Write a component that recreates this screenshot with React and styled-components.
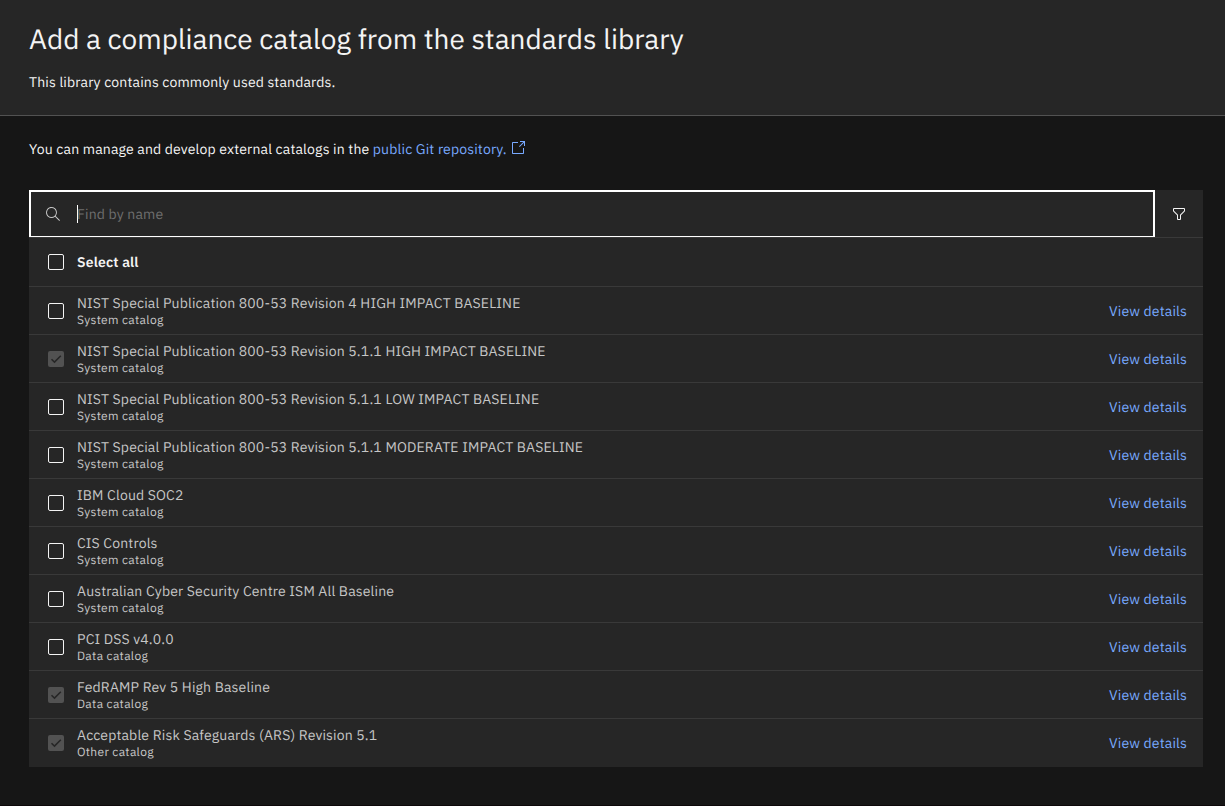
import React from "react";
import styled, { createGlobalStyle } from "styled-components";

const GlobalStyle = createGlobalStyle`
  * { box-sizing: border-box; }
  html, body { margin: 0; height: 100%; background: #161616; overflow: hidden; }
  body {
    font-family: "IBM Plex Sans", Roboto, "Liberation Sans", sans-serif;
    font-size: 14px;
    line-height: 18px;
    letter-spacing: 0.16px;
    color: #f4f4f4;
    text-rendering: geometricPrecision;
  }
`;

const Page = styled.div`
  display: flex;
  flex-direction: column;
  height: 806px;
  background: #161616;
  border-bottom: 1px solid #0d080a;
`;

const Header = styled.header`
  flex: none;
  height: 116px;
  padding: 21px 29px 0;
  background: #262626;
  border-bottom: 1px solid #525252;
`;

const Title = styled.h1`
  margin: 0;
  font-size: 28px;
  line-height: 36px;
  font-weight: 400;
  letter-spacing: 0;
  white-space: nowrap;
`;

const Subtitle = styled.p`
  margin: 16px 0 0;
`;

const Main = styled.main`
  padding: 24px 22px 0 29px;
`;

const Intro = styled.p`
  display: flex;
  align-items: center;
  height: 18px;
  margin: 0 0 32px;
  white-space: pre;
`;

const Link = styled.a`
  display: inline-flex;
  align-items: center;
  gap: 3px;
  color: #78a9ff;
  text-decoration: none;

  svg { margin-bottom: 2px; }
`;

const Catalogs = styled.section`
  background: #262626;
`;

const Toolbar = styled.div`
  display: flex;
  height: 48px;
  border-bottom: 1px solid #393939;
`;

const SearchBox = styled.div`
  flex: 1;
  display: flex;
  align-items: center;
  border: 2px solid #fff;
  border-bottom-width: 1px;
  padding-left: 14px;
`;

const Caret = styled.span`
  width: 1px;
  height: 18px;
  margin-left: 16px;
  background: #fff;
`;

const Placeholder = styled.span`
  margin-left: -1px;
  color: #6f6f6f;
`;

const FilterButton = styled.button`
  display: flex;
  align-items: center;
  justify-content: center;
  width: 48px;
  padding: 0;
  border: 0;
  background: transparent;
  color: #f4f4f4;
`;

const Row = styled.div`
  display: flex;
  align-items: center;
  height: ${(p) => p.$height || 48}px;
  padding: 0 16px 0 19px;
  border-bottom: 1px solid #393939;
  &:last-child { border-bottom-color: transparent; }
`;

const Check = styled.span`
  flex: none;
  display: flex;
  width: 16px;
  height: 16px;
  margin-right: 13px;
  border-radius: 2px;
  border: ${(p) => (p.$locked ? "0" : "1px solid #f4f4f4")};
  background: ${(p) => (p.$locked ? "#525252" : "transparent")};
`;

const SelectAll = styled.span`
  font-weight: 600;
`;

const Labels = styled.div`
  flex: 1;
  display: flex;
  flex-direction: column;
  padding-top: 2px;
`;

const Name = styled.span`
  line-height: 18px;
  color: #c6c6c6;
`;

const Kind = styled.span`
  font-size: 12px;
  line-height: 18px;
  letter-spacing: 0.32px;
  color: #c6c6c6;
`;

const SearchIcon = () => (
  <svg width="16" height="16" viewBox="0 0 16 16" fill="#c6c6c6">
    <path d="M15 14.3 10.7 10c1.9-2.3 1.6-5.8-.7-7.7S4.2.7 2.3 3 .7 8.8 3 10.7c2 1.7 5 1.7 7 0l4.3 4.3.7-.7ZM2 6.5C2 4 4 2 6.5 2S11 4 11 6.5 9 11 6.5 11 2 9 2 6.5Z" />
  </svg>
);

const FilterIcon = () => (
  <svg width="16" height="16" viewBox="0 0 32 32" fill="currentColor">
    <path d="M18 28H14a2 2 0 0 1-2-2V18.41L4.59 11A2 2 0 0 1 4 9.59V6A2 2 0 0 1 6 4H26a2 2 0 0 1 2 2V9.59A2 2 0 0 1 27.41 11L20 18.41V26A2 2 0 0 1 18 28ZM6 6V9.59l8 8V26h4V17.59l8-8V6Z" />
  </svg>
);

const LaunchIcon = () => (
  <svg width="16" height="16" viewBox="0 0 16 16" fill="currentColor">
    <path d="M13 14H3c-.6 0-1-.4-1-1V3c0-.6.4-1 1-1h5v1H3v10h10V8h1v5c0 .6-.4 1-1 1Z" />
    <path d="M10 1v1h3.3L9 6.3l.7.7L14 2.7V6h1V1Z" />
  </svg>
);

const CheckIcon = () => (
  <svg width="16" height="16" viewBox="0 0 16 16" fill="none" stroke="#262626" strokeWidth="1.5">
    <path d="M3.5 8.2 6.5 11.1 12.8 4.7" />
  </svg>
);

const catalogs = [
  { name: "NIST Special Publication 800-53 Revision 4 HIGH IMPACT BASELINE", kind: "System" },
  { name: "NIST Special Publication 800-53 Revision 5.1.1 HIGH IMPACT BASELINE", kind: "System", locked: true },
  { name: "NIST Special Publication 800-53 Revision 5.1.1 LOW IMPACT BASELINE", kind: "System" },
  { name: "NIST Special Publication 800-53 Revision 5.1.1 MODERATE IMPACT BASELINE", kind: "System" },
  { name: "IBM Cloud SOC2", kind: "System" },
  { name: "CIS Controls", kind: "System" },
  { name: "Australian Cyber Security Centre ISM All Baseline", kind: "System" },
  { name: "PCI DSS v4.0.0", kind: "Data" },
  { name: "FedRAMP Rev 5 High Baseline", kind: "Data", locked: true },
  { name: "Acceptable Risk Safeguards (ARS) Revision 5.1", kind: "Other", locked: true },
];

export default function App() {
  return (
    <Page>
      <GlobalStyle />
      <Header>
        <Title>Add a compliance catalog from the standards library</Title>
        <Subtitle>This library contains commonly used standards.</Subtitle>
      </Header>
      <Main>
        <Intro>
          {"You can manage and develop external catalogs in the "}
          <Link>
            public Git repository.
            <LaunchIcon />
          </Link>
        </Intro>
        <Catalogs>
          <Toolbar>
            <SearchBox>
              <SearchIcon />
              <Caret />
              <Placeholder>Find by name</Placeholder>
            </SearchBox>
            <FilterButton aria-label="Filter">
              <FilterIcon />
            </FilterButton>
          </Toolbar>
          <Row $height={49}>
            <Check />
            <SelectAll>Select all</SelectAll>
          </Row>
          {catalogs.map((c) => (
            <Row key={c.name}>
              <Check $locked={c.locked}>{c.locked && <CheckIcon />}</Check>
              <Labels>
                <Name>{c.name}</Name>
                <Kind>{c.kind} catalog</Kind>
              </Labels>
              <Link>View details</Link>
            </Row>
          ))}
        </Catalogs>
      </Main>
    </Page>
  );
}
